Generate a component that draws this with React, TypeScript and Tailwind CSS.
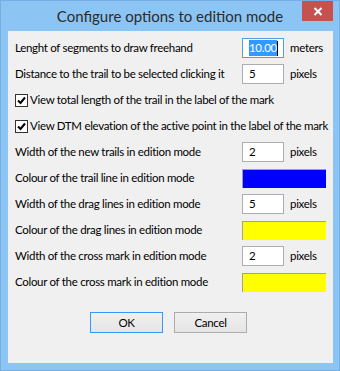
import React from "react";

const font = { fontFamily: 'Lato, "Noto Sans", Arial, sans-serif' };

function Input({ value, focused }: { value: string; focused?: boolean }) {
  return (
    <div
      className={`w-[42px] h-[20px] bg-white border flex items-center pl-[6px] ${
        focused ? "border-[#569de5]" : "border-[#abadb3]"
      }`}
    >
      {focused ? (
        <span className="flex items-center">
          <span className="bg-[#3399ff] text-white leading-[16px]">{value}</span>
          <span className="w-[1px] h-[15px] bg-black" />
        </span>
      ) : (
        <span className="leading-[16px]">{value}</span>
      )}
    </div>
  );
}

function ColorBox({ color }: { color: string }) {
  return (
    <div
      className="w-[84px] h-[19px] border-t border-l border-[#a0a0a0]"
      style={{ backgroundColor: color }}
    />
  );
}

function Check({ label }: { label: string }) {
  return (
    <div className="h-[26px] flex items-center">
      <div className="w-[13px] h-[13px] border border-[#333333] bg-white flex items-center justify-center shrink-0">
        <svg width="11" height="11" viewBox="0 0 11 11">
          <path d="M2 5.5 L4.5 8 L9 2.5" fill="none" stroke="#000" strokeWidth="2" />
        </svg>
      </div>
      <span className="ml-[2px] whitespace-nowrap">{label}</span>
    </div>
  );
}

function Row({ label, children }: { label: string; children: React.ReactNode }) {
  return (
    <div className="h-[26px] flex items-center">
      <div className="w-[227px] whitespace-nowrap shrink-0">{label}</div>
      {children}
    </div>
  );
}

function Unit({ text }: { text: string }) {
  return <span className="ml-[6px]">{text}</span>;
}

export default function App() {
  return (
    <div
      className="w-[340px] h-[371px] bg-[#8cc5f4] border border-[#74afe4] flex flex-col text-[11.5px] text-black"
      style={font}
    >
      <div className="h-[30px] relative flex items-center justify-center">
        <span className="text-[15px] text-[#2b2b2b] leading-none mt-[1px]">
          Configure options to edition mode
        </span>
        <div className="absolute right-[6px] top-0 w-[31px] h-[20px] bg-[#c75050] flex items-center justify-center">
          <svg width="10" height="9" viewBox="0 0 10 9">
            <path d="M1.5 1 L8.5 8 M8.5 1 L1.5 8" stroke="#fff" strokeWidth="2" />
          </svg>
        </div>
      </div>
      <div className="ml-[7px] w-[325px] h-[332px] bg-[#f0f0f0] pt-[4px] pl-[7px] flex flex-col tracking-[-0.3px] overflow-hidden">
        <Row label="Lenght of segments to draw freehand">
          <Input value="10.00" focused />
          <Unit text="meters" />
        </Row>
        <Row label="Distance to the trail to be selected clicking it">
          <Input value="5" />
          <Unit text="pixels" />
        </Row>
        <Check label="View total length of the trail in the label of the mark" />
        <Check label="View DTM elevation of the active point in the label of the mark" />
        <Row label="Width of the new trails in edition mode">
          <Input value="2" />
          <Unit text="pixels" />
        </Row>
        <Row label="Colour of the trail line in edition mode">
          <ColorBox color="#0000ff" />
        </Row>
        <Row label="Width of the drag lines in edition mode">
          <Input value="5" />
          <Unit text="pixels" />
        </Row>
        <Row label="Colour of the drag lines in edition mode">
          <ColorBox color="#ffff00" />
        </Row>
        <Row label="Width of the cross mark in edition mode">
          <Input value="2" />
          <Unit text="pixels" />
        </Row>
        <Row label="Colour of the cross mark in edition mode">
          <ColorBox color="#ffff00" />
        </Row>
        <div className="mt-[17px] ml-[75px] flex gap-[11px]">
          <button className="w-[73px] h-[21px] border border-[#3399ff] bg-gradient-to-b from-[#f0f0f0] to-[#e5e5e5] flex items-center justify-center">
            OK
          </button>
          <button className="w-[73px] h-[21px] border border-[#acacac] bg-gradient-to-b from-[#f0f0f0] to-[#e5e5e5] flex items-center justify-center">
            Cancel
          </button>
        </div>
      </div>
    </div>
  );
}
